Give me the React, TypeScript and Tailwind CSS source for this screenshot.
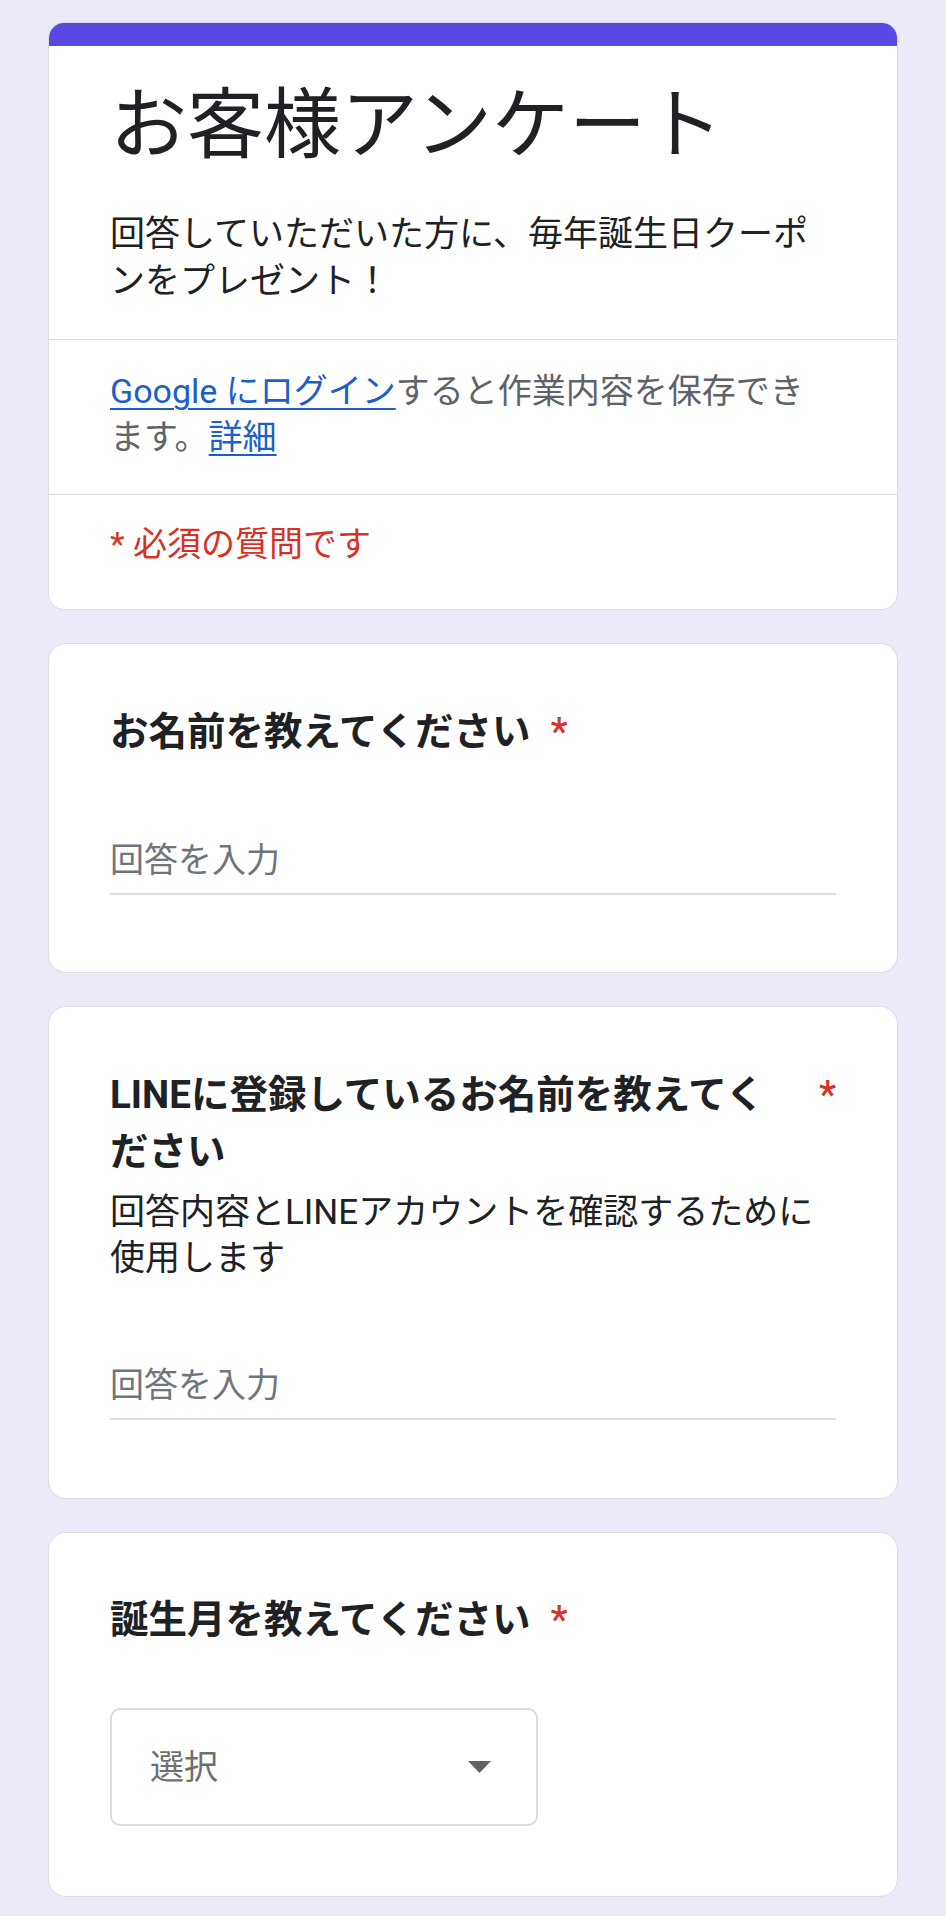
// App.tsx
const font = "font-['Roboto','Noto_Sans_CJK_JP',sans-serif]"

const Asterisk = () => <span className="shrink-0 pl-[20px] font-medium text-[#d93025]">*</span>

type QuestionProps = {
  title: string
  description?: string
  children: React.ReactNode
  bodyClass: string
  padClass: string
}

const Question = (props: QuestionProps) => {
  return (
    <div className={`rounded-[18px] border border-[#dadce0] bg-white px-[61px] ${props.padClass}`}>
      <div className="flex items-start text-[38.5px] font-bold leading-[57px] text-[#202124]">
        <div>{props.title}</div>
        <Asterisk />
      </div>
      {props.description && (
        <p className="mt-[10px] text-[35px] leading-[46px] text-[#202124]">{props.description}</p>
      )}
      <div className={props.bodyClass}>{props.children}</div>
    </div>
  )
}

const TextAnswer = () => (
  <input
    placeholder="回答を入力"
    className="block h-[58px] w-full border-b-2 border-[#e0e0e0] bg-transparent pb-[10px] text-[34px] text-[#202124] outline-none placeholder:text-[#70757a]"
  />
)

export default function App() {
  return (
    <div className={`min-h-[1916px] bg-[#eceaf8] px-[48px] pt-[22px] pb-[19px] ${font}`}>
      <div className="flex flex-col gap-[33px]">
        {/* Header card */}
        <div className="overflow-hidden rounded-[16px] border border-[#dadce0] bg-white">
          <div className="h-[23px] bg-[#5a48e3]" />
          <div className="border-b border-[#dadce0] px-[61px] pt-[32px] pb-[34px]">
            <h1 className="text-[77px] font-normal leading-[96px] text-[#202124]">お客様アンケート</h1>
            <p className="mt-[37px] text-[35px] leading-[47px] text-[#202124]">
              回答していただいた方に、毎年誕生日クーポンをプレゼント！
            </p>
          </div>
          <div className="border-b border-[#dadce0] px-[61px] pt-[28px] pb-[34px] text-[34px] leading-[46px] text-[#5f6368]">
            <a className="text-[#1a5fcb] underline decoration-[2px] underline-offset-[5px]" href="#">
              Google にログイン
            </a>
            すると作業内容を保存できます。
            <a className="text-[#1a5fcb] underline decoration-[2px] underline-offset-[5px]" href="#">
              詳細
            </a>
          </div>
          <div className="px-[61px] pt-[26px] pb-[42px] text-[34px] leading-[46px] text-[#d93025]">
            * 必須の質問です
          </div>
        </div>

        <Question title="お名前を教えてください" padClass="pt-[59px] pb-[77px]" bodyClass="mt-[77px]">
          <TextAnswer />
        </Question>

        <Question
          title="LINEに登録しているお名前を教えてください"
          description="回答内容とLINEアカウントを確認するために使用します"
          padClass="pt-[59px] pb-[78px]"
          bodyClass="mt-[80px]"
        >
          <TextAnswer />
        </Question>

        <Question title="誕生月を教えてください" padClass="pt-[58px] pb-[70px]" bodyClass="mt-[60px]">
          <div className="flex h-[118px] w-[428px] items-center justify-between rounded-[10px] border-2 border-[#dadce0] pl-[38px] pr-[45px]">
            <span className="text-[34px] text-[#6f6f6f]">選択</span>
            <svg width="23" height="12" viewBox="0 0 23 12">
              <polygon points="0,0 23,0 11.5,12" fill="#5f6368" />
            </svg>
          </div>
        </Question>
      </div>
    </div>
  )
}
